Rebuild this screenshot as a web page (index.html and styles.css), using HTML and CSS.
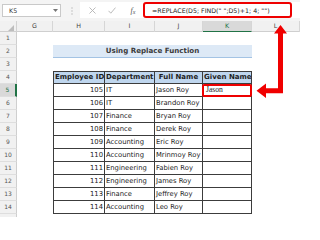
FILE: index.html
```html
<!DOCTYPE html>
<html lang="en">
<head>
<meta charset="utf-8">
<title>Using Replace Function</title>
<link rel="stylesheet" href="styles.css">
</head>
<body>
<div class="app">
  <div class="toolbar">
    <div class="namebox">
      <span>K5</span>
      <svg class="caret" width="5" height="3" viewBox="0 0 5 3"><polygon points="0,0 5,0 2.5,3" fill="#777"/></svg>
    </div>
    <div class="sep">
      <svg width="2" height="8" viewBox="0 0 2 8"><circle cx="1" cy="1" r="0.7" fill="#b5b5b5"/><circle cx="1" cy="4" r="0.7" fill="#b5b5b5"/><circle cx="1" cy="7" r="0.7" fill="#b5b5b5"/></svg>
    </div>
    <div class="fbar">
      <span class="ico"><svg width="7" height="7" viewBox="0 0 7 7"><path d="M0.5 0.5 L6.5 6.5 M6.5 0.5 L0.5 6.5" stroke="#b3b3b3" stroke-width="0.9" fill="none"/></svg></span>
      <span class="ico"><svg width="8" height="7" viewBox="0 0 8 7"><path d="M0.5 3.8 L2.8 6.2 L7.5 0.6" stroke="#b3b3b3" stroke-width="0.9" fill="none"/></svg></span>
      <span class="ico fx">f<span class="sub">x</span></span>
      <div class="formula">=REPLACE(D5; FIND(" ";D5)+1; 4; "")</div>
    </div>
  </div>

  <div class="sheet">
    <div class="row colhdr">
      <div class="corner"><svg width="6" height="6" viewBox="0 0 6 6"><polygon points="6,0 6,6 0,6" fill="#bdbdbd"/></svg></div>
      <div class="ch">G</div><div class="ch">H</div><div class="ch">I</div><div class="ch">J</div><div class="ch active">K</div><div class="ch">L</div>
    </div>

    <div class="row"><div class="rh">1</div></div>
    <div class="row"><div class="rh">2</div><div></div><div class="title">Using Replace Function</div></div>
    <div class="row"><div class="rh">3</div></div>
    <div class="row"><div class="rh">4</div><div></div>
      <div class="c th first">Employee ID</div><div class="c th">Department</div><div class="c th">Full Name</div><div class="c th">Given Name</div>
    </div>
    <div class="row"><div class="rh active">5</div><div></div>
      <div class="c num first">105</div><div class="c">IT</div><div class="c">Jason Roy</div><div class="c sel">Jason</div>
    </div>
    <div class="row"><div class="rh">6</div><div></div>
      <div class="c num first">106</div><div class="c">IT</div><div class="c">Brandon Roy</div><div class="c"></div>
    </div>
    <div class="row"><div class="rh">7</div><div></div>
      <div class="c num first">107</div><div class="c">Finance</div><div class="c">Bryan Roy</div><div class="c"></div>
    </div>
    <div class="row"><div class="rh">8</div><div></div>
      <div class="c num first">108</div><div class="c">Finance</div><div class="c">Derek Roy</div><div class="c"></div>
    </div>
    <div class="row"><div class="rh">9</div><div></div>
      <div class="c num first">109</div><div class="c">Accounting</div><div class="c">Eric Roy</div><div class="c"></div>
    </div>
    <div class="row"><div class="rh">10</div><div></div>
      <div class="c num first">110</div><div class="c">Accounting</div><div class="c">Mrinmoy Roy</div><div class="c"></div>
    </div>
    <div class="row"><div class="rh">11</div><div></div>
      <div class="c num first">111</div><div class="c">Engineering</div><div class="c">Fabien Roy</div><div class="c"></div>
    </div>
    <div class="row"><div class="rh">12</div><div></div>
      <div class="c num first">112</div><div class="c">Engineering</div><div class="c">James Roy</div><div class="c"></div>
    </div>
    <div class="row"><div class="rh">13</div><div></div>
      <div class="c num first">113</div><div class="c">Finance</div><div class="c">Jeffrey Roy</div><div class="c"></div>
    </div>
    <div class="row"><div class="rh">14</div><div></div>
      <div class="c num first">114</div><div class="c">Accounting</div><div class="c">Leo Roy</div><div class="c"></div>
    </div>
    <div class="row"><div class="rh"></div></div>
  </div>

  <svg class="annot" width="300" height="217" viewBox="0 0 300 217">
    <polygon fill="#f00000" points="280.5,25 274,33.5 278,33.5 278,88.2 266,88.2 266,83.5 256.5,90.7 266,98 266,93.2 283,93.2 283,33.5 287,33.5"/>
  </svg>
</div>
</body>
</html>
```

FILE: styles.css
```css
* { box-sizing: border-box; }

body {
  margin: 0;
  background: #ffffff;
  font-family: "DejaVu Sans", "Liberation Sans", sans-serif;
  color: #222;
}

.app {
  position: relative;
  width: 300px;
  height: 217px;
  overflow: hidden;
  background: #ffffff;
}

/* ---------- formula toolbar ---------- */
.toolbar {
  height: 21px;
  background: #f4f4f4;
  display: flex;
  align-items: flex-start;
}

.namebox {
  margin: 4px 0 0 2px;
  width: 59px;
  height: 13px;
  border: 1px solid #c9c9c9;
  background: #fff;
  display: flex;
  align-items: center;
  justify-content: space-between;
  padding: 0 2px 0 6px;
  font-size: 6.3px;
  color: #333;
}

.sep {
  width: 19px;
  height: 21px;
  display: flex;
  align-items: center;
  justify-content: flex-end;
  padding-right: 7px;
}

.fbar {
  flex: 1;
  margin-top: 2px;
  height: 16px;
  background: #fff;
  display: flex;
  align-items: center;
  padding-left: 2px;
}

.ico {
  width: 20px;
  height: 16px;
  display: flex;
  align-items: center;
  justify-content: center;
}

.fx {
  font-family: "Liberation Serif", serif;
  font-style: italic;
  font-size: 8px;
  color: #555;
  margin-left: 1px;
  width: 20px;
}

.fx .sub {
  font-size: 6px;
  position: relative;
  top: 1.5px;
}

.formula {
  width: 149px;
  height: 16px;
  border: 2.5px solid #ee0000;
  border-radius: 3px;
  background: #fff;
  font-size: 6.3px;
  line-height: 11px;
  padding: 0.5px 0 0 7px;
  white-space: nowrap;
  color: #222;
}

/* ---------- sheet ---------- */
.row {
  display: grid;
  grid-template-columns: 17px 36px 52px 50px 48px 49px 1fr;
  height: 13px;
}

.colhdr {
  height: 11px;
  background: #f1f1f1;
  border-bottom: 1px solid #cfcfcf;
}

.corner {
  border-right: 1px solid #d2d2d2;
  display: flex;
  align-items: flex-end;
  justify-content: flex-end;
  padding: 0 2px 1px 0;
}

.ch {
  border-right: 1px solid #d6d6d6;
  font-size: 6.3px;
  line-height: 10px;
  text-align: center;
  color: #444;
}

.ch.active {
  background: #d9d9d9;
  color: #217346;
  border-bottom: 1.5px solid #217346;
}

.rh {
  background: #f1f1f1;
  border-right: 1px solid #cfcfcf;
  border-bottom: 1px solid #dedede;
  font-size: 6px;
  line-height: 12px;
  text-align: center;
  color: #555;
}

.rh.active {
  background: #d9d9d9;
  color: #217346;
  border-right: 2px solid #217346;
}

.title {
  grid-column: span 4;
  background: #dde9f6;
  border-bottom: 1px solid #a3c3e4;
  font-weight: bold;
  font-size: 7.1px;
  line-height: 12px;
  text-align: center;
  color: #3b3b3b;
}

.c {
  border-right: 1px solid #3c3c3c;
  border-bottom: 1px solid #3c3c3c;
  font-size: 6.8px;
  line-height: 12px;
  padding: 0 1px;
  white-space: nowrap;
  overflow: hidden;
  color: #222;
}

.c.first {
  border-left: 1px solid #3c3c3c;
}

.th {
  background: #bfd6ee;
  border-top: 1px solid #3c3c3c;
  font-weight: bold;
  font-size: 7px;
  line-height: 11px;
  text-align: center;
  color: #1e1e1e;
}

.num {
  text-align: right;
  padding-right: 1px;
}

.sel {
  position: relative;
  overflow: visible;
  font-family: "Liberation Serif", serif;
  font-size: 7.6px;
  padding-left: 3px;
}

.sel::after {
  content: "";
  position: absolute;
  left: -1px;
  top: -0.5px;
  right: -0.5px;
  bottom: -0.5px;
  border: 2px solid #ee0000;
  border-radius: 2px;
}

/* ---------- annotation overlay ---------- */
.annot {
  position: absolute;
  top: 0;
  left: 0;
  pointer-events: none;
}
```
